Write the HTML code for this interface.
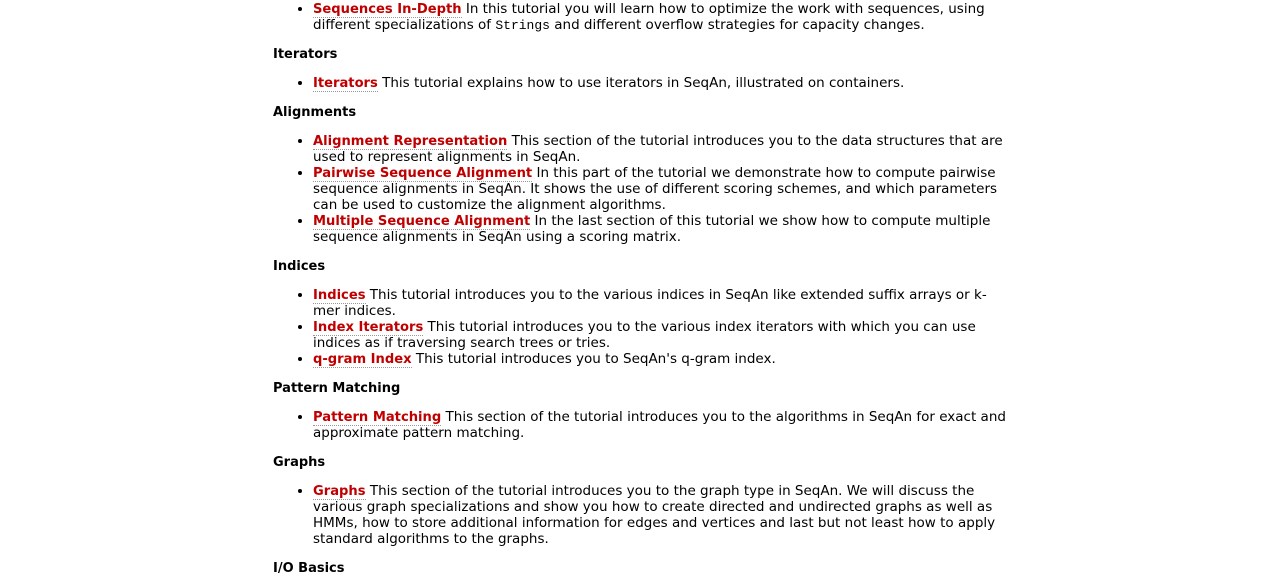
<!DOCTYPE html>
<html><head><meta charset="utf-8"><style>
html,body{margin:0;padding:0;background:#fff;}
body{font-family:"DejaVu Sans","Liberation Sans",sans-serif;font-size:13.5px;line-height:16px;color:#000;}
.c{position:absolute;left:273px;top:1px;width:800px;white-space:nowrap;}
h3{font-size:13px;font-weight:bold;margin:0;line-height:16px;height:16px;position:relative;top:1px;}
ul{margin:13px 0;padding-left:40px;}
ul.f{margin-top:0;}
li{margin:0;line-height:16px;}
li>span{display:block;height:16px;}
a{color:#c00000;font-weight:bold;font-size:13.1px;line-height:1;text-decoration:none;border-bottom:1px dotted #999;}
code{font-family:"Liberation Mono",monospace;font-size:13px;line-height:1;}
</style></head><body><div class="c">
<ul class="f"><li><span><a>Sequences In-Depth</a> In this tutorial you will learn how to optimize the work with sequences, using</span><span>different specializations of <code>Strings</code> and different overflow strategies for capacity changes.</span></li></ul>
<h3>Iterators</h3>
<ul><li><span><a>Iterators</a> This tutorial explains how to use iterators in SeqAn, illustrated on containers.</span></li></ul>
<h3>Alignments</h3>
<ul><li><span><a>Alignment Representation</a> This section of the tutorial introduces you to the data structures that are</span><span>used to represent alignments in SeqAn.</span></li>
<li><span><a>Pairwise Sequence Alignment</a> In this part of the tutorial we demonstrate how to compute pairwise</span><span>sequence alignments in SeqAn. It shows the use of different scoring schemes, and which parameters</span><span>can be used to customize the alignment algorithms.</span></li>
<li><span><a>Multiple Sequence Alignment</a> In the last section of this tutorial we show how to compute multiple</span><span>sequence alignments in SeqAn using a scoring matrix.</span></li></ul>
<h3>Indices</h3>
<ul><li><span><a>Indices</a> This tutorial introduces you to the various indices in SeqAn like extended suffix arrays or k-</span><span>mer indices.</span></li>
<li><span><a>Index Iterators</a> This tutorial introduces you to the various index iterators with which you can use</span><span>indices as if traversing search trees or tries.</span></li>
<li><span><a>q-gram Index</a> This tutorial introduces you to SeqAn's q-gram index.</span></li></ul>
<h3>Pattern Matching</h3>
<ul><li><span><a>Pattern Matching</a> This section of the tutorial introduces you to the algorithms in SeqAn for exact and</span><span>approximate pattern matching.</span></li></ul>
<h3>Graphs</h3>
<ul><li><span><a>Graphs</a> This section of the tutorial introduces you to the graph type in SeqAn. We will discuss the</span><span>various graph specializations and show you how to create directed and undirected graphs as well as</span><span>HMMs, how to store additional information for edges and vertices and last but not least how to apply</span><span>standard algorithms to the graphs.</span></li></ul>
<h3>I/O Basics</h3>
</div></body></html>
